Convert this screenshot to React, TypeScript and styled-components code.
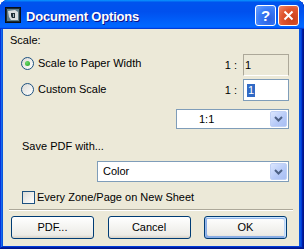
import React from "react";
import styled, { createGlobalStyle } from "styled-components";

const GlobalStyle = createGlobalStyle`
  html, body {
    margin: 0;
    padding: 0;
    background: #fff;
  }
  body {
    font-family: "Liberation Sans", Arial, sans-serif;
    font-size: 11px;
    color: #000;
  }
`;

//window frame
const Window = styled.div`
  width: 304px;
  height: 249px;
  box-sizing: border-box;
  display: flex;
  flex-direction: column;
  padding-bottom: 3px;
  background: #0855dd;
  border-radius: 8px 8px 0 0;
  box-shadow: inset -1px -1px #00138c, inset 1px 0 #0831d9,
    inset -2px -2px #001ea0, inset 2px 0 #166aee, inset -3px -3px #003bda,
    inset 3px 0 #0855dd, inset -5px 0 #0855dd;
`;

const TitleBar = styled.div`
  height: 29px;
  flex: none;
  display: flex;
  align-items: center;
  padding: 0 5px;
  border-radius: 8px 8px 0 0;
  background: linear-gradient(
    180deg,
    #0997ff,
    #0053ee 8%,
    #0050ee 40%,
    #0066ff 88%,
    #0066ff 93%,
    #005bff 95%,
    #003dd7 96%,
    #003dd7
  );
`;

const TitleText = styled.div`
  flex: 1;
  margin: 3px 0 0 5px;
  color: #fff;
  font-weight: bold;
  font-size: 13px;
  line-height: 15px;
  letter-spacing: -0.2px;
  text-shadow: 1px 1px #0f1089;
`;

const Controls = styled.div`
  display: flex;
  gap: 2px;
  margin-top: 1px;
`;

const CaptionButton = styled.div<{ $kind: "help" | "close" }>`
  width: 21px;
  height: 21px;
  box-sizing: border-box;
  border: 1px solid #fff;
  border-radius: 3px;
  display: flex;
  align-items: center;
  justify-content: center;
  color: #fff;
  font-weight: bold;
  font-size: 15px;
  background: ${(p) =>
    p.$kind === "help"
      ? "radial-gradient(circle at 70% 70%, #2a5fe0 0%, #3a7cf8 55%, #6ea4ff 100%)"
      : "radial-gradient(circle at 70% 70%, #c8401a 0%, #e0552e 55%, #f28a6a 100%)"};
`;

const Body = styled.div`
  flex: 1;
  margin: 0 5px 0 3px;
  background: #ece9d8;
  display: flex;
  flex-direction: column;
  padding: 5px 10px 7px 7px;
  line-height: 13px;
`;

const GroupLabel = styled.div<{ $indent?: number }>`
  padding-left: ${(p) => p.$indent || 0}px;
  margin-top: ${(p) => (p.$indent ? 11 : 0)}px;
`;

const ScaleRow = styled.div<{ $top: number; $lift: number }>`
  height: 22px;
  margin-top: ${(p) => p.$top}px;
  display: flex;
  align-items: center;
  justify-content: space-between;
  & > label {
    margin-top: ${(p) => -p.$lift * 2}px;
  }
`;

const Option = styled.label`
  display: flex;
  align-items: center;
  gap: 4px;
  margin-left: 11px;
`;

const Radio = styled.span<{ $checked?: boolean }>`
  width: 13px;
  height: 13px;
  box-sizing: border-box;
  border: 1px solid #1c5180;
  border-radius: 50%;
  display: flex;
  align-items: center;
  justify-content: center;
  background: linear-gradient(135deg, #dcdbd5, #fff);
  &::after {
    content: "";
    display: ${(p) => (p.$checked ? "block" : "none")};
    width: 5px;
    height: 5px;
    border-radius: 50%;
    background: radial-gradient(circle at 35% 35%, #6ad96c, #21a121);
  }
`;

const RatioPart = styled.div`
  display: flex;
  align-items: center;
  gap: 6px;
`;

const RatioField = styled.div<{ $disabled?: boolean }>`
  width: 46px;
  height: 22px;
  box-sizing: border-box;
  border: 1px solid ${(p) => (p.$disabled ? "#aca899" : "#7f9db9")};
  border-bottom-color: ${(p) => (p.$disabled ? "#fff" : "#7f9db9")};
  background: ${(p) => (p.$disabled ? "#ece9d8" : "#fff")};
  padding-left: ${(p) => (p.$disabled ? 1 : 3)}px;
  display: flex;
  align-items: center;
`;

const Selection = styled.span`
  background: #316ac5;
  color: #fff;
  height: 13px;
  line-height: 13px;
  padding: 0 1px;
`;

const Combo = styled.div<{ $width: number; $height: number; $pad: number; $top: number }>`
  align-self: flex-end;
  margin-top: ${(p) => p.$top}px;
  width: ${(p) => p.$width}px;
  height: ${(p) => p.$height}px;
  box-sizing: border-box;
  border: 1px solid #7f9db9;
  background: #fff;
  display: flex;
  align-items: stretch;
  padding: 1px;
  & > span {
    flex: 1;
    display: flex;
    align-items: center;
    padding-left: ${(p) => p.$pad}px;
  }
`;

const ComboButton = styled.div`
  width: 17px;
  border-radius: 2px;
  border: 1px solid #bfd0f5;
  box-sizing: border-box;
  background: linear-gradient(135deg, #dbe6fe, #b5c9f7 60%, #a9bff4);
  display: flex;
  align-items: center;
  justify-content: center;
`;

const CheckRow = styled.label`
  display: flex;
  align-items: center;
  gap: 2px;
  margin: 9px 0 0 12px;
`;

const CheckBox = styled.span`
  width: 13px;
  height: 13px;
  box-sizing: border-box;
  border: 1px solid #1c5180;
  background: linear-gradient(135deg, #dcdcd7, #fff);
`;

const Separator = styled.div`
  margin: 5px -4px 0 -1px;
  height: 1px;
  background: #aca899;
  border-bottom: 1px solid #fff;
`;

const Footer = styled.div`
  display: flex;
  justify-content: space-between;
  margin: 5px 2px 0 1px;
`;

const Button = styled.div<{ $default?: boolean }>`
  width: 83px;
  height: 23px;
  box-sizing: border-box;
  border: 1px solid #003c74;
  border-radius: 3px;
  display: flex;
  align-items: center;
  justify-content: center;
  background: linear-gradient(180deg, #fff, #ecebe6 86%, #d6d0c5);
  box-shadow: ${(p) =>
    p.$default
      ? "inset -1px 1px #cee7ff, inset 1px 2px #98b8ea, inset -2px 2px #bcd4f6, inset 1px -1px #89ade4, inset 2px -2px #89ade4"
      : "none"};
`;

const Chevron = () => (
  <svg width="9" height="6" viewBox="0 0 9 6">
    <path d="M1 1 L4.5 4.5 L8 1" fill="none" stroke="#4d6185" strokeWidth="2" />
  </svg>
);

const AppIcon = () => (
  <svg width="16" height="16" viewBox="0 0 16 16">
    <rect x="0.5" y="0.5" width="15" height="15" fill="#1d2b34" stroke="#0a0f14" />
    <rect x="2" y="2" width="12" height="12" fill="#5f7d8c" />
    <path d="M3 4 L10 3 L13 5 L13 13 L6 13 L4 10 Z" fill="#d9dde0" />
    <path d="M6 6 L10 6 L10 11 L7 11 L6 9 Z" fill="#1d2b34" />
    <path d="M8 7 L9 7 L9 10 L8 10 Z" fill="#9fb2bc" />
  </svg>
);

export default function App() {
  return (
    <>
      <GlobalStyle />
      <Window>
        {/*title bar */}
        <TitleBar>
          <AppIcon />
          <TitleText>Document Options</TitleText>
          <Controls>
            <CaptionButton $kind="help">?</CaptionButton>
            <CaptionButton $kind="close">
              <svg width="11" height="11" viewBox="0 0 11 11">
                <path d="M1.5 1.5 L9.5 9.5 M9.5 1.5 L1.5 9.5" stroke="#fff" strokeWidth="2" />
              </svg>
            </CaptionButton>
          </Controls>
        </TitleBar>

        <Body>
          <GroupLabel>Scale:</GroupLabel>
          <ScaleRow $top={7} $lift={2}>
            <Option>
              <Radio $checked />
              Scale to Paper Width
            </Option>
            <RatioPart>
              <span>1 :</span>
              <RatioField $disabled>1</RatioField>
            </RatioPart>
          </ScaleRow>
          <ScaleRow $top={3} $lift={1}>
            <Option>
              <Radio />
              Custom Scale
            </Option>
            <RatioPart>
              <span>1 :</span>
              <RatioField>
                <Selection>1</Selection>
              </RatioField>
            </RatioPart>
          </ScaleRow>
          <Combo $width={113} $height={20} $pad={21} $top={8}>
            <span>1:1</span>
            <ComboButton>
              <Chevron />
            </ComboButton>
          </Combo>

          <GroupLabel $indent={12}>Save PDF with...</GroupLabel>
          <Combo $width={192} $height={21} $pad={4} $top={8}>
            <span>Color</span>
            <ComboButton>
              <Chevron />
            </ComboButton>
          </Combo>

          <CheckRow>
            <CheckBox />
            Every Zone/Page on New Sheet
          </CheckRow>

          <Separator />
          {/*buttons */}
          <Footer>
            <Button>PDF...</Button>
            <Button>Cancel</Button>
            <Button $default>OK</Button>
          </Footer>
        </Body>
      </Window>
    </>
  );
}
